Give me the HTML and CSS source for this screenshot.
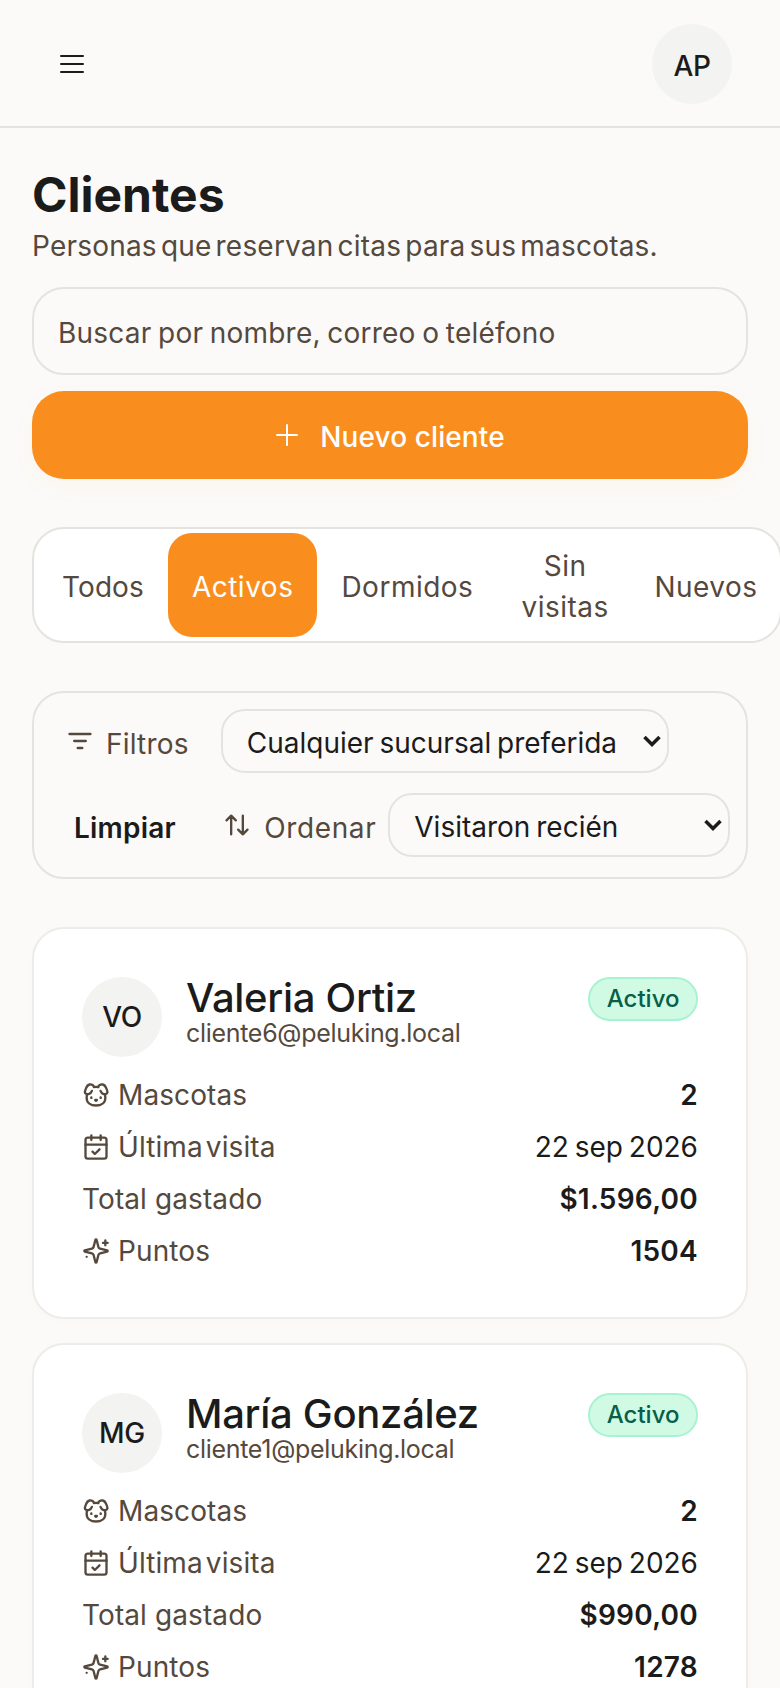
FILE: index.html
```html
<!DOCTYPE html>
<html lang="es">
<head>
<meta charset="utf-8">
<title>Clientes</title>
<link rel="stylesheet" href="styles.css">
</head>
<body>
<header class="topbar">
  <button class="menu-btn" aria-label="Menú">
    <svg class="ic-menu" viewBox="0 0 24 24" fill="none" stroke="currentColor" stroke-width="2" stroke-linecap="round"><path d="M1 4h22M1 12h22M1 20h22"/></svg>
  </button>
  <div class="avatar avatar-top">AP</div>
</header>
<main class="page">
  <section class="heading">
    <h1>Clientes</h1>
    <p>Personas que reservan citas para sus mascotas.</p>
  </section>
  <div class="search">Buscar por nombre, correo o teléfono</div>
  <button class="new-btn">
    <svg class="ic-plus" viewBox="0 0 24 24" fill="none" stroke="currentColor" stroke-width="2" stroke-linecap="round"><path d="M12 2v20M2 12h20"/></svg>
    <span class="new-label">Nuevo cliente</span>
  </button>
  <nav class="tabs">
    <span class="tab">Todos</span>
    <span class="tab active">Activos</span>
    <span class="tab">Dormidos</span>
    <span class="tab wrap">Sin visitas</span>
    <span class="tab">Nuevos</span>
  </nav>
  <section class="filters">
    <div class="frow">
      <span class="flabel">
        <svg class="ic" viewBox="0 0 24 24" fill="none" stroke="currentColor" stroke-width="2" stroke-linecap="round"><path d="M3 6h18M7 12h10M10 18h4"/></svg>
        <span class="ltext">Filtros</span>
      </span>
      <select class="sel sel-branch"><option>Cualquier sucursal preferida</option></select>
    </div>
    <div class="frow">
      <button class="clear">Limpiar</button>
      <span class="flabel order">
        <svg class="ic" viewBox="0 0 24 24" fill="none" stroke="currentColor" stroke-width="2" stroke-linecap="round" stroke-linejoin="round"><path d="M21 16l-4 4-4-4M17 20V4M3 8l4-4 4 4M7 4v16"/></svg>
        <span class="ltext">Ordenar</span>
      </span>
      <select class="sel sel-order"><option>Visitaron recién</option></select>
    </div>
  </section>
  <article class="card">
    <div class="card-head">
      <div class="avatar">VO</div>
      <div class="who"><h2>Valeria Ortiz</h2><div class="mail">cliente6@peluking.local</div></div>
      <span class="badge">Activo</span>
    </div>
    <dl class="stats">
      <div class="stat"><dt><svg class="ic-s" viewBox="0 0 24 24" fill="none" stroke="currentColor" stroke-width="2" stroke-linecap="round" stroke-linejoin="round"><path d="M11.25 16.25h1.5L12 17zM16 14v.5M4.42 11.247A13.152 13.152 0 0 0 4 14.556C4 18.728 7.582 21 12 21s8-2.272 8-6.444a11.702 11.702 0 0 0-.493-3.309M8 14v.5M8.5 8.5c-.384 1.05-1.083 2.028-2.344 2.5-1.931.722-3.576-.297-3.656-1-.113-.994 1.177-6.53 4-7 1.923-.321 3.651.845 3.651 2.235A7.497 7.497 0 0 1 14 5.277c0-1.39 1.844-2.598 3.767-2.277 2.823.47 4.113 6.006 4 7-.08.703-1.725 1.722-3.656 1-1.261-.472-1.855-1.45-2.239-2.5"/></svg>Mascotas</dt><dd class="strong">2</dd></div>
      <div class="stat"><dt><svg class="ic-s" viewBox="0 0 24 24" fill="none" stroke="currentColor" stroke-width="2" stroke-linecap="round" stroke-linejoin="round"><rect x="3" y="4" width="18" height="18" rx="2"/><path d="M8 2v4M16 2v4M3 10h18M9 16l2 2 4-4"/></svg>Última visita</dt><dd class="date">22 sep 2026</dd></div>
      <div class="stat"><dt class="total">Total gastado</dt><dd class="strong">$1.596,00</dd></div>
      <div class="stat"><dt><svg class="ic-s" viewBox="0 0 24 24" fill="none" stroke="currentColor" stroke-width="2" stroke-linecap="round" stroke-linejoin="round"><path d="M9.937 15.5A2 2 0 0 0 8.5 14.063l-6.135-1.582a.5.5 0 0 1 0-.962L8.5 9.936A2 2 0 0 0 9.937 8.5l1.582-6.135a.5.5 0 0 1 .963 0L14.063 8.5A2 2 0 0 0 15.5 9.937l6.135 1.581a.5.5 0 0 1 0 .964L15.5 14.063a2 2 0 0 0-1.437 1.437l-1.582 6.135a.5.5 0 0 1-.963 0zM20 3v4M22 5h-4M4 17v.01"/></svg>Puntos</dt><dd class="strong">1504</dd></div>
    </dl>
  </article>
  <article class="card">
    <div class="card-head">
      <div class="avatar">MG</div>
      <div class="who"><h2>María González</h2><div class="mail">cliente1@peluking.local</div></div>
      <span class="badge">Activo</span>
    </div>
    <dl class="stats">
      <div class="stat"><dt><svg class="ic-s" viewBox="0 0 24 24" fill="none" stroke="currentColor" stroke-width="2" stroke-linecap="round" stroke-linejoin="round"><path d="M11.25 16.25h1.5L12 17zM16 14v.5M4.42 11.247A13.152 13.152 0 0 0 4 14.556C4 18.728 7.582 21 12 21s8-2.272 8-6.444a11.702 11.702 0 0 0-.493-3.309M8 14v.5M8.5 8.5c-.384 1.05-1.083 2.028-2.344 2.5-1.931.722-3.576-.297-3.656-1-.113-.994 1.177-6.53 4-7 1.923-.321 3.651.845 3.651 2.235A7.497 7.497 0 0 1 14 5.277c0-1.39 1.844-2.598 3.767-2.277 2.823.47 4.113 6.006 4 7-.08.703-1.725 1.722-3.656 1-1.261-.472-1.855-1.45-2.239-2.5"/></svg>Mascotas</dt><dd class="strong">2</dd></div>
      <div class="stat"><dt><svg class="ic-s" viewBox="0 0 24 24" fill="none" stroke="currentColor" stroke-width="2" stroke-linecap="round" stroke-linejoin="round"><rect x="3" y="4" width="18" height="18" rx="2"/><path d="M8 2v4M16 2v4M3 10h18M9 16l2 2 4-4"/></svg>Última visita</dt><dd class="date">22 sep 2026</dd></div>
      <div class="stat"><dt class="total">Total gastado</dt><dd class="strong">$990,00</dd></div>
      <div class="stat"><dt><svg class="ic-s" viewBox="0 0 24 24" fill="none" stroke="currentColor" stroke-width="2" stroke-linecap="round" stroke-linejoin="round"><path d="M9.937 15.5A2 2 0 0 0 8.5 14.063l-6.135-1.582a.5.5 0 0 1 0-.962L8.5 9.936A2 2 0 0 0 9.937 8.5l1.582-6.135a.5.5 0 0 1 .963 0L14.063 8.5A2 2 0 0 0 15.5 9.937l6.135 1.581a.5.5 0 0 1 0 .964L15.5 14.063a2 2 0 0 0-1.437 1.437l-1.582 6.135a.5.5 0 0 1-.963 0zM20 3v4M22 5h-4M4 17v.01"/></svg>Puntos</dt><dd class="strong">1278</dd></div>
    </dl>
  </article>
</main>
</body>
</html>
```
FILE: styles.css
```css
* { box-sizing: border-box; }
html, body { margin: 0; height: 1688px; overflow: hidden; }
body { background: #fbfaf8; color: #1b1b1b; font-family: Inter, "Noto Sans", sans-serif; font-size: 28px; line-height: 40px; letter-spacing: 0.2px; }
button, select { font: inherit; color: inherit; letter-spacing: inherit; word-spacing: inherit; }
.topbar { height: 128px; border-bottom: 2px solid #e5e3e0; display: flex; align-items: center; justify-content: space-between; padding: 2px 48px 0; }
.menu-btn { width: 48px; height: 48px; padding: 12px; border: 0; background: none; display: flex; }
.ic-menu { width: 24px; height: 24px; }
.avatar { width: 80px; height: 80px; border-radius: 50%; background: #f3f3f1; display: flex; align-items: center; justify-content: center; font-weight: 500; flex: none; letter-spacing: -0.3px; }
.avatar-top { padding-top: 4px; }
.page { padding: 35px 32px 0; }
.heading h1 { margin: 0; font-size: 48px; line-height: 63px; font-weight: 700; letter-spacing: 0; }
.heading p { margin: 0; color: #55483d; word-spacing: -4px; }
.search { margin-top: 21px; height: 88px; border: 2px solid #e5e3e0; border-radius: 32px; padding: 4px 24px 0; display: flex; align-items: center; color: #55483d; word-spacing: -1.4px; }
.new-btn { margin-top: 16px; width: 100%; height: 88px; border: 0; border-radius: 32px; background: #f98e1f; color: #fff; font-weight: 550; display: flex; align-items: center; justify-content: center; gap: 21px; letter-spacing: 0.1px; box-shadow: 0 8px 24px rgba(249,142,31,.04); }
.new-label { padding-top: 4px; }
.ic-plus { width: 24px; height: 24px; }
.tabs { margin-top: 48px; width: 750px; height: 116px; background: #fff; border: 2px solid #e5e3e0; border-radius: 32px; padding: 4px; display: flex; align-items: center; color: #55483d; letter-spacing: 0.5px; }
.tab { flex: none; height: 104px; padding: 4px 24px 0; border-radius: 24px; display: flex; align-items: center; text-align: center; }
.tab:first-child { letter-spacing: 0.1px; }
.tab.wrap { width: 133px; line-height: 41px; }
.tab.active { background: #f98e1f; color: #fff; }
.filters { margin-top: 48px; height: 188px; border: 2px solid #e5e3e0; border-radius: 32px; padding: 16px 16px 0 32px; display: flex; flex-direction: column; gap: 20px; }
.frow { display: flex; align-items: center; height: 64px; }
.flabel { display: flex; align-items: center; gap: 12px; color: #55483d; }
.flabel.order { gap: 13px; letter-spacing: 0.6px; }
.ltext { padding-top: 6px; }
.ic { width: 28px; height: 28px; flex: none; }
.sel { appearance: none; height: 64px; border: 2px solid #e5e3e0; border-radius: 24px; padding: 4px 24px 0; background: #fbfaf8 url("data:image/svg+xml,%3Csvg xmlns='http://www.w3.org/2000/svg' viewBox='0 0 18 12'%3E%3Cpath d='M1.500 2L9 9.500 16.500 2' fill='none' stroke='%231b1b1b' stroke-width='3.500'/%3E%3C/svg%3E") no-repeat right 6px center / 18px 12px; color: #1b1b1b; letter-spacing: 0; word-spacing: -2px; }
.sel-branch { width: 448px; margin-left: 32px; }
.sel-order { width: 343px; margin-left: 12px; }
.clear { border: 0; background: none; padding: 6px 0 0; margin-left: 8px; width: 150px; text-align: left; font-weight: 600; }
.card { margin-top: 24px; height: 392px; background: #fff; border: 2px solid #eeece9; border-radius: 32px; padding: 48px 48px 0; box-shadow: 0 2px 8px rgba(0,0,0,.01); }
.filters + .card { margin-top: 48px; }
.card-head { display: flex; align-items: flex-start; gap: 24px; }
.who { flex: 1; }
.who h2 { margin: 0; font-size: 40px; line-height: 42px; font-weight: 550; letter-spacing: -0.3px; }
.mail { font-size: 25px; line-height: 28px; color: #55483d; letter-spacing: -0.3px; }
.badge { height: 44px; padding: 0 16.5px; border: 2px solid #a7f3d0; background: #d1fae5; color: #065f46; border-radius: 22px; font-size: 24px; line-height: 40px; font-weight: 450; letter-spacing: 0; }
.stats { margin: 12px 0 0; display: flex; flex-direction: column; }
.stat { display: flex; justify-content: space-between; height: 52px; align-items: center; }
.stat dt { display: flex; align-items: center; gap: 8px; color: #55483d; letter-spacing: 0.1px; word-spacing: -5px; }
.stat dt.total { word-spacing: 0; }
.stat dd { margin: 0; }
.stat .date { letter-spacing: 0; word-spacing: -2px; }
.ic-s { width: 28px; height: 28px; }
.strong { font-weight: 600; letter-spacing: 0.25px; }
```
